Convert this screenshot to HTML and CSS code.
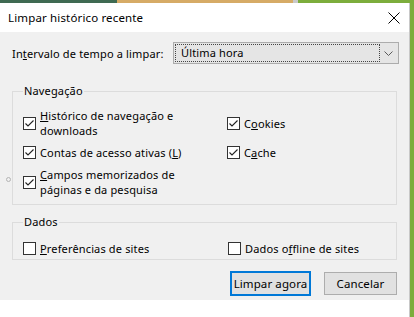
FILE: index.html
```html
<!DOCTYPE html>
<html lang="pt">
<head>
  <meta charset="UTF-8">
  <meta name="viewport" content="width=device-width, initial-scale=1.0">
  <title>Limpar histórico recente</title>
  <link rel="stylesheet" href="styles.css">
</head>
<body>
  <div class="screen">
    <div class="backdrop-top">
      <span class="seg seg-dark"></span>
      <span class="seg seg-tan"></span>
      <span class="seg seg-gray"></span>
      <span class="seg seg-green"></span>
    </div>
    <div class="main">
      <div class="dialog">
        <div class="titlebar">
          <span class="title">Limpar histórico recente</span>
          <svg class="close" width="12" height="12" viewBox="0 0 12 12">
            <path d="M0.5 0.5 L11.5 11.5 M11.5 0.5 L0.5 11.5" stroke="#000" stroke-width="1" fill="none"/>
          </svg>
        </div>
        <div class="content">
          <span class="grip-dot"></span>
          <div class="range-row">
            <span class="range-label">In<u>t</u>ervalo de tempo a limpar:</span>
            <div class="select">
              <span class="select-value">Última hora</span>
              <span class="select-arrow">
                <svg width="9" height="5" viewBox="0 0 9 5">
                  <polyline points="0.5,0.5 4.5,4.5 8.5,0.5" stroke="#5a5a5a" stroke-width="1" fill="none"/>
                </svg>
              </span>
            </div>
          </div>

          <fieldset class="group group-nav">
            <legend>Navegação</legend>
            <div class="items">
              <label class="item">
                <span class="box"><svg width="11" height="11" viewBox="0 0 11 11"><polyline points="1.5,5.5 4,8 9.5,2.5" stroke="#222" stroke-width="1.1" fill="none"/></svg></span>
                <span class="item-text"><u>H</u>istórico de navegação e<br>downloads</span>
              </label>
              <label class="item">
                <span class="box"><svg width="11" height="11" viewBox="0 0 11 11"><polyline points="1.5,5.5 4,8 9.5,2.5" stroke="#222" stroke-width="1.1" fill="none"/></svg></span>
                <span class="item-text">C<u>o</u>okies</span>
              </label>
              <label class="item">
                <span class="box"><svg width="11" height="11" viewBox="0 0 11 11"><polyline points="1.5,5.5 4,8 9.5,2.5" stroke="#222" stroke-width="1.1" fill="none"/></svg></span>
                <span class="item-text">Contas de acesso ativas (<u>L</u>)</span>
              </label>
              <label class="item">
                <span class="box"><svg width="11" height="11" viewBox="0 0 11 11"><polyline points="1.5,5.5 4,8 9.5,2.5" stroke="#222" stroke-width="1.1" fill="none"/></svg></span>
                <span class="item-text">C<u>a</u>che</span>
              </label>
              <label class="item">
                <span class="box"><svg width="11" height="11" viewBox="0 0 11 11"><polyline points="1.5,5.5 4,8 9.5,2.5" stroke="#222" stroke-width="1.1" fill="none"/></svg></span>
                <span class="item-text"><u>C</u>ampos memorizados de<br>páginas e da pesquisa</span>
              </label>
            </div>
          </fieldset>

          <fieldset class="group group-data">
            <legend>Dados</legend>
            <div class="items">
              <label class="item">
                <span class="box"></span>
                <span class="item-text"><u>P</u>referências de sites</span>
              </label>
              <label class="item item-shift">
                <span class="box"></span>
                <span class="item-text">Dados o<u>f</u>fline de sites</span>
              </label>
            </div>
          </fieldset>

          <div class="buttons">
            <button class="btn btn-default">Limpar agora</button>
            <button class="btn">Cancelar</button>
          </div>
        </div>
      </div>
      <div class="side-strip"></div>
    </div>
  </div>
</body>
</html>
```

FILE: styles.css
```css
body {
  margin: 0;
  font-family: "Noto Sans", "Segoe UI", sans-serif;
  font-size: 11px;
  letter-spacing: 0.15px;
  color: #000;
  background-color: #fff;
}
.screen {
  width: 414px;
  height: 317px;
  overflow: hidden;
}
.backdrop-top {
  display: flex;
  height: 3px;
}
.seg {
  display: block;
  height: 100%;
}
.seg-dark {
  width: 117px;
  background-color: #3f6a52;
}
.seg-tan {
  width: 176px;
  background-color: #d6ab66;
}
.seg-gray {
  width: 5px;
  background-color: #c9c9c9;
}
.seg-green {
  flex: 1;
  background-color: #7cad3c;
}
.main {
  display: flex;
  height: 314px;
}
.dialog {
  width: 409px;
  border-right: 1px solid #c8c8c8;
  flex-shrink: 0;
}
.titlebar {
  height: 29px;
  background-color: #fff;
  display: flex;
  align-items: center;
  justify-content: space-between;
  padding: 0 9px 0 8px;
}
.title {
  font-size: 11.5px;
  line-height: 16px;
}
.content {
  position: relative;
  background-color: #f0f0f0;
  height: 268px;
  box-sizing: border-box;
  padding: 10px 12px 0;
}
.grip-dot {
  position: absolute;
  left: 6px;
  top: 145px;
  width: 5px;
  height: 5px;
  box-sizing: border-box;
  border: 1px solid #b4b4b4;
  border-radius: 50%;
}
.range-row {
  display: flex;
  align-items: center;
  height: 22px;
}
.range-label {
  width: 161px;
  flex-shrink: 0;
}
.select {
  width: 226px;
  height: 22px;
  flex-shrink: 0;
  box-sizing: border-box;
  border: 1px solid #acacac;
  background-color: #e5e5e5;
  padding: 1px;
  display: flex;
}
.select-value {
  width: 205px;
  height: 18px;
  box-sizing: border-box;
  border: 1px dotted #444;
  padding-left: 5px;
  line-height: 16px;
}
.select-arrow {
  flex: 1;
  display: flex;
  align-items: center;
  justify-content: center;
}
.group {
  margin: 0;
  border: 1px solid #dcdcdc;
  min-inline-size: 0;
}
.group legend {
  padding: 0 1px;
  line-height: 16px;
}
.group-nav {
  margin-top: 19px;
  padding: 9px 10px 7px;
}
.group-data {
  margin-top: 9px;
  padding: 11px 10px 3px;
}
.items {
  display: grid;
  grid-template-columns: 204px 1fr;
  row-gap: 7px;
}
.item {
  display: flex;
  align-items: center;
  gap: 4px;
  line-height: 15px;
}
.item-shift {
  margin-left: 1px;
}
.box {
  width: 13px;
  height: 13px;
  box-sizing: border-box;
  border: 1px solid #333;
  background-color: #fff;
  flex-shrink: 0;
  display: flex;
  align-items: center;
  justify-content: center;
}
.box svg {
  display: block;
}
.buttons {
  display: flex;
  justify-content: flex-end;
  align-items: center;
  gap: 13px;
  margin-top: 11px;
}
.btn {
  font-family: inherit;
  font-size: 11.5px;
  letter-spacing: 0.1px;
  color: #000;
  background-color: #e1e1e1;
  border: 1px solid #adadad;
  border-radius: 0;
  width: 73px;
  height: 23px;
  padding: 0;
}
.btn-default {
  width: 81px;
  height: 25px;
  border: 2px solid #0078d7;
}
.side-strip {
  flex: 1;
  background-color: #7cad3c;
}
```
